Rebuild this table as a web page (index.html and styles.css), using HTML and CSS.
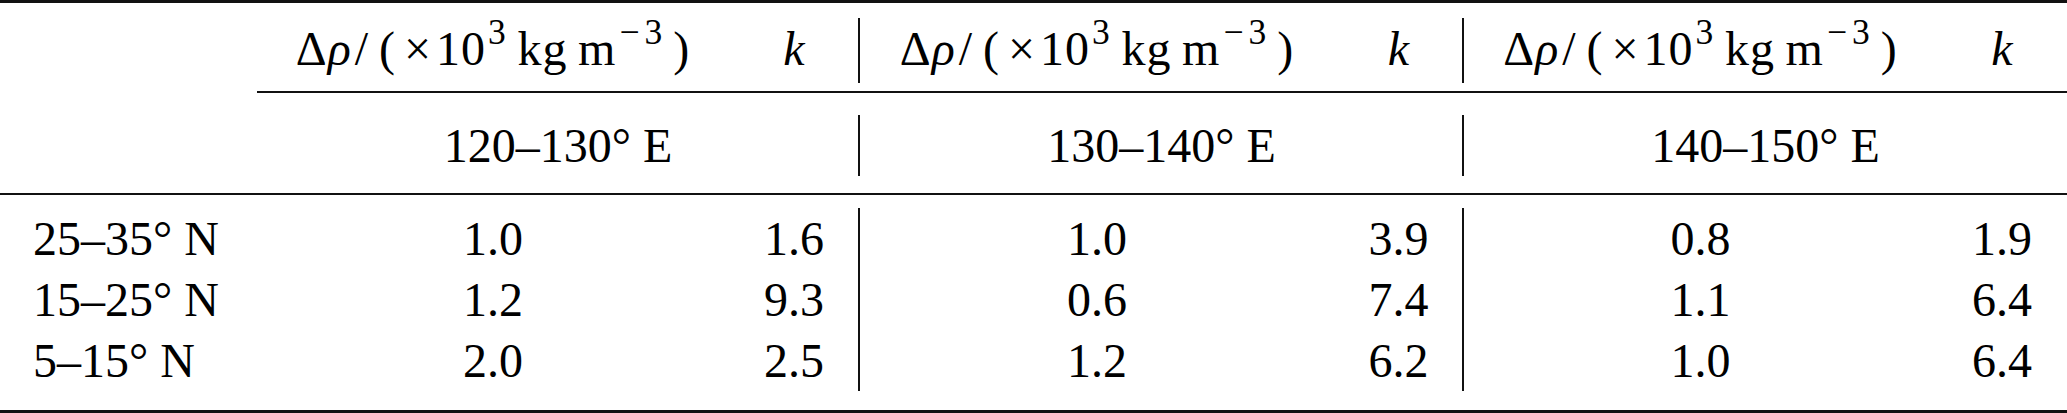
FILE: index.html
```html
<!DOCTYPE html>
<html lang="en">
<head>
    <meta charset="UTF-8">
    <title>Density contrast and k by region</title>
    <link rel="stylesheet" href="styles.css">
</head>
<body>

<div class="table">
    <div class="rule heavy"></div>

    <div class="row head">
        <div class="cell"></div>
        <div class="cell"><span class="unit">Δ<i>ρ</i><span class="sl">/</span>(<span class="x">×</span>10<sup>3</sup>&thinsp;kg&thinsp;m<sup class="neg">−3</sup><span class="cp">)</span></span></div>
        <div class="cell"><i>k</i></div>
        <div class="cell bar"><span class="unit">Δ<i>ρ</i><span class="sl">/</span>(<span class="x">×</span>10<sup>3</sup>&thinsp;kg&thinsp;m<sup class="neg">−3</sup><span class="cp">)</span></span></div>
        <div class="cell"><i>k</i></div>
        <div class="cell bar"><span class="unit">Δ<i>ρ</i><span class="sl">/</span>(<span class="x">×</span>10<sup>3</sup>&thinsp;kg&thinsp;m<sup class="neg">−3</sup><span class="cp">)</span></span></div>
        <div class="cell"><i>k</i></div>
    </div>

    <div class="rule light cmid"></div>

    <div class="row region">
        <div class="cell"></div>
        <div class="cell span2">120–130° E</div>
        <div class="cell span2 bar">130–140° E</div>
        <div class="cell span2 bar">140–150° E</div>
    </div>

    <div class="rule light"></div>

    <div class="body">
        <div class="row">
            <div class="cell label">25–35° N</div>
            <div class="cell">1.0</div>
            <div class="cell">1.6</div>
            <div class="cell bar">1.0</div>
            <div class="cell">3.9</div>
            <div class="cell bar">0.8</div>
            <div class="cell">1.9</div>
        </div>
        <div class="row">
            <div class="cell label">15–25° N</div>
            <div class="cell">1.2</div>
            <div class="cell">9.3</div>
            <div class="cell bar">0.6</div>
            <div class="cell">7.4</div>
            <div class="cell bar">1.1</div>
            <div class="cell">6.4</div>
        </div>
        <div class="row">
            <div class="cell label">5–15° N</div>
            <div class="cell">2.0</div>
            <div class="cell">2.5</div>
            <div class="cell bar">1.2</div>
            <div class="cell">6.2</div>
            <div class="cell bar">1.0</div>
            <div class="cell">6.4</div>
        </div>
    </div>

    <div class="rule heavy"></div>
</div>

</body>
</html>
```

FILE: styles.css
```css
body {
    margin: 0;
    background: #fff;
    color: #000;
    font-family: "Liberation Serif", "Times New Roman", serif;
    font-size: 48px;
}
.table {
    width: 2067px;
}
.rule {
    background: #111;
}
.rule.heavy {
    height: 3px;
}
.rule.light {
    height: 2px;
}
.cmid {
    margin-left: 257px;
}
.row {
    display: grid;
    grid-template-columns: 257px 472px 130px 475px 129px 474px 130px;
}
.cell {
    text-align: center;
    white-space: nowrap;
}
.span2 {
    grid-column: span 2;
}
.bar {
    border-left: 2px solid #111;
    margin-left: -1px;
}
.label {
    text-align: left;
    padding-left: 33px;
}
.head {
    padding: 15px 0 8px;
}
.head .cell {
    height: 65px;
    line-height: 62px;
}
.region {
    padding: 22px 0 17px;
}
.region .cell {
    height: 61px;
    line-height: 61px;
}
.body {
    padding: 13px 0 19px;
}
.body .cell {
    height: 61px;
    line-height: 61px;
}
.unit {
    letter-spacing: 1px;
}
.unit sup {
    font-size: 0.74em;
    line-height: 0;
    vertical-align: 0.6em;
    letter-spacing: 1px;
    margin-left: 2px;
}
.unit sup.neg {
    letter-spacing: 5px;
    margin-left: 3px;
}
.unit .sl {
    margin: 0 10px 0 3px;
}
.unit .x {
    margin: 0 4px 0 8px;
}
.unit .cp {
    margin-left: 6px;
}
```
